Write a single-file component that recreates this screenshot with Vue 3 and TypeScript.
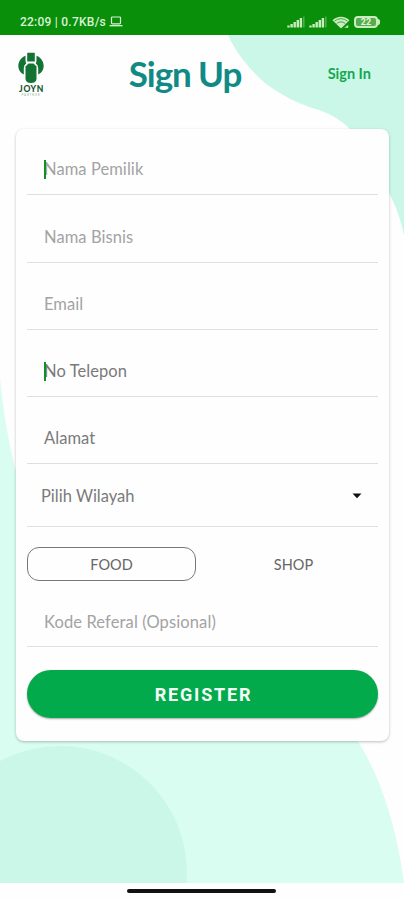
<script setup lang="ts">
import { ref } from 'vue'

interface Field {
  label: string
  caret?: boolean
  dark?: boolean
  size: number
}

const fields: Field[] = [
  { label: 'Nama Pemilik', caret: true, size: 66 },
  { label: 'Nama Bisnis', size: 68 },
  { label: 'Email', size: 67 },
  { label: 'No Telepon', caret: true, dark: true, size: 67 },
  { label: 'Alamat', dark: true, size: 67 },
]
const kinds = ['FOOD', 'SHOP']
const selected = ref('FOOD')
const bars = [2, 3.5, 5.5, 7.5, 9.5]
</script>

<template>
  <div class="screen">
    <svg class="backdrop" viewBox="0 0 404 848" aria-hidden="true">
      <path fill="#cbf7e8" d="M228 0C235 15 245 30 265 48C281 60 300 70 319 75C333 80 343 87 350 94C374 112 380 133 389 158C396 171 401 185 404 201V0Z" />
      <path fill="#d9fdf0" d="M0 342C3 375 8 405 15 433C60 570 270 590 357 705C382 743 397 795 404 848H0Z" />
      <path fill="#cbf7e8" d="M0 726A127 127 0 0 1 186.500 848H0Z" />
    </svg>

    <header class="status">
      <span class="clock">22:09 | 0.7KB/s</span>
      <svg class="laptop" width="14" height="11" viewBox="0 0 14 11" fill="none" stroke="#d9f3d6">
        <rect x="2.500" y="1" width="9" height="6.800" rx="0.800" stroke-width="1.200" />
        <path d="M0.500 9.700H13.500" stroke-width="1.300" />
      </svg>
      <div class="indicators">
        <svg v-for="n in 2" :key="n" width="18" height="12" viewBox="0 0 18 12">
          <rect v-for="(h, i) in bars" :key="i" :x="i * 3.1 + 0.3" :y="11.5 - h" width="2.4" :height="h" fill="#c9edbf" />
          <rect x="16" y="0.500" width="1.600" height="11" fill="#4dae47" />
        </svg>
        <svg class="wifi" width="18" height="13" viewBox="0 0 18 13">
          <path d="M0.500 4.200C5 -0.500 13 -0.500 17.500 4.200L9 12.500Z" fill="#c9edbf" />
          <path d="M2.500 5.100Q9 0.200 15.500 5.100M4.700 7.500Q9 4.100 13.300 7.500" fill="none" stroke="#3a9c34" stroke-width="0.900" />
          <path d="M11.500 12L16.500 8.500V12Z" fill="#d9f3d6" stroke="#098f09" stroke-width="0.600" />
        </svg>
        <div class="battery"><span>22</span></div>
      </div>
    </header>

    <nav class="top">
      <div class="logo">
        <svg width="26" height="32" viewBox="0 0 26 32" fill="#127332">
          <path d="M7.500 3.800C-1.500 7.500-2 19 5.800 22.500V16Q6 12.800 8.200 11.500Q7.500 10 7.500 8Z" />
          <path d="M18.500 3.800C27.500 7.500 28 19 20.200 22.500V16Q20 12.800 17.800 11.500Q18.500 10 18.500 8Z" />
          <rect x="9.200" y="0.800" width="7.600" height="8.700" rx="0.600" />
          <path d="M10.500 11.500H15.500L18.500 14.500V27Q18 31 13 31Q8 31 7.500 27V14.500Z" />
        </svg>
        <span class="brand">JOYN</span>
        <span class="sub">PARTNER</span>
      </div>
      <h1>Sign Up</h1>
      <a class="signin">Sign In</a>
    </nav>

    <main class="card">
      <div v-for="f in fields" :key="f.label" class="field" :class="{ dark: f.dark, caret: f.caret }" :style="{ height: f.size + 'px' }">
        <span>{{ f.label }}</span>
      </div>
      <div class="field dark region">
        <span>Pilih Wilayah</span>
        <svg width="10" height="6" viewBox="0 0 10 6"><path d="M0.500 0.500H9.500L5 5.300Z" fill="#111" /></svg>
      </div>
      <div class="kinds">
        <button v-for="k in kinds" :key="k" :class="{ on: selected === k }" @click="selected = k">{{ k }}</button>
      </div>
      <div class="field referral"><span>Kode Referal (Opsional)</span></div>
      <button class="register">REGISTER</button>
    </main>

    <footer class="home"><i></i></footer>
  </div>
</template>

<style>
body { margin: 0; background: #fff; }
</style>

<style scoped>
* { box-sizing: border-box; }
.screen {
  position: relative;
  width: 404px;
  height: 900px;
  overflow: hidden;
  display: flex;
  flex-direction: column;
  background: #fefefe;
  font-family: Lato, "Liberation Sans", sans-serif;
}
.backdrop { position: absolute; left: 0; top: 35px; width: 404px; height: 848px; }
.status {
  position: relative;
  height: 35px;
  flex: none;
  display: flex;
  align-items: flex-start;
  padding: 14px 24px 0 20px;
  background: #098f09;
  color: #d9f3d6;
}
.clock { font: 500 12px/16px Roboto, sans-serif; letter-spacing: 0.24px; white-space: nowrap; }
.laptop { margin: 2px 0 0 3px; }
.indicators { display: flex; align-items: center; margin: 1px 0 0 auto; gap: 4px; height: 14px; }
.wifi { margin-left: 1px; }
.battery {
  position: relative;
  width: 24px;
  height: 12px;
  margin: 0 2px 0 0;
  border: 2px solid #c9edbf;
  border-radius: 4px;
  background: #58ac4f;
  display: flex;
  align-items: center;
  justify-content: center;
  font: 700 9px/8px Roboto, sans-serif;
  color: #e2f8dd;
}
.battery::after {
  content: "";
  position: absolute;
  right: -4px;
  top: 1px;
  width: 3px;
  height: 6px;
  border-radius: 0 2px 2px 0;
  background: #c9edbf;
}
.top {
  position: relative;
  flex: none;
  height: 94px;
  display: grid;
  grid-template-columns: 110px 150px 1fr;
}
.logo { width: 30px; margin: 17px 0 0 16px; display: flex; flex-direction: column; align-items: center; color: #16552f; }
.brand { font: 900 8.500px/8px Lato, sans-serif; letter-spacing: 0.6px; margin: 1px -1px 0 0; }
.sub { font: 400 3px/4px Lato, sans-serif; letter-spacing: 0.8px; color: #8fb59d; }
h1 {
  margin: 16px 0 0;
  text-align: center;
  font-size: 35px;
  line-height: 44px;
  font-weight: 700;
  letter-spacing: -1.1px;
  color: #118a85;
  white-space: nowrap;
}
.signin { margin: 29px 33px 0 0; text-align: right; font-size: 14.5px; line-height: 20px; font-weight: 700; color: #13a74e; }
.card {
  position: relative;
  flex: none;
  width: 373px;
  height: 612px;
  margin-left: 16px;
  padding: 0 11px;
  border-radius: 8px;
  background: #fefefe;
  box-shadow: 0 1px 3px rgba(0, 0, 0, 0.26);
}
.field {
  display: flex;
  align-items: flex-end;
  padding: 0 17px 15px;
  border-bottom: 1.500px solid #dedede;
  font-size: 16.5px;
  letter-spacing: 0.07px;
  line-height: 20px;
  color: #a3a3a3;
}
.dark { color: #7a7a7a; }
.caret span { position: relative; }
.caret span::before {
  content: "";
  position: absolute;
  left: 0;
  top: 1px;
  width: 2px;
  height: 19px;
  background: #12901d;
}
.region { height: 63px; padding: 0 16px 20px 14px; justify-content: space-between; letter-spacing: 0; }
.region svg { margin-bottom: 7px; }
.kinds { display: grid; grid-template-columns: 169px 1fr; gap: 7px; margin-top: 20px; height: 34px; }
.kinds button {
  border: 1px solid transparent;
  border-radius: 12px;
  background: none;
  padding: 1px 0 0;
  font: 400 14.5px/20px Lato, sans-serif;
  color: #666;
}
.kinds button:last-child { padding-left: 6px; }
.kinds .on { border-color: #777; }
.referral { height: 66px; padding-bottom: 14px; letter-spacing: 0.12px; }
.register {
  display: block;
  width: 351px;
  height: 48px;
  margin-top: 23px;
  padding: 1px 0 0 2px;
  border: 0;
  border-radius: 24px;
  background: #03aa4c;
  color: #f4fff7;
  font: 700 18px/48px Roboto, sans-serif;
  letter-spacing: 1.8px;
  box-shadow: 0 1px 2px rgba(0, 0, 0, 0.35);
}
.home {
  position: relative;
  height: 17px;
  margin-top: auto;
  display: flex;
  justify-content: center;
  padding: 6px 2px 0 0;
  background: #fefefe;
}
.home i { width: 149px; height: 4px; border-radius: 2px; background: #111; }
</style>
